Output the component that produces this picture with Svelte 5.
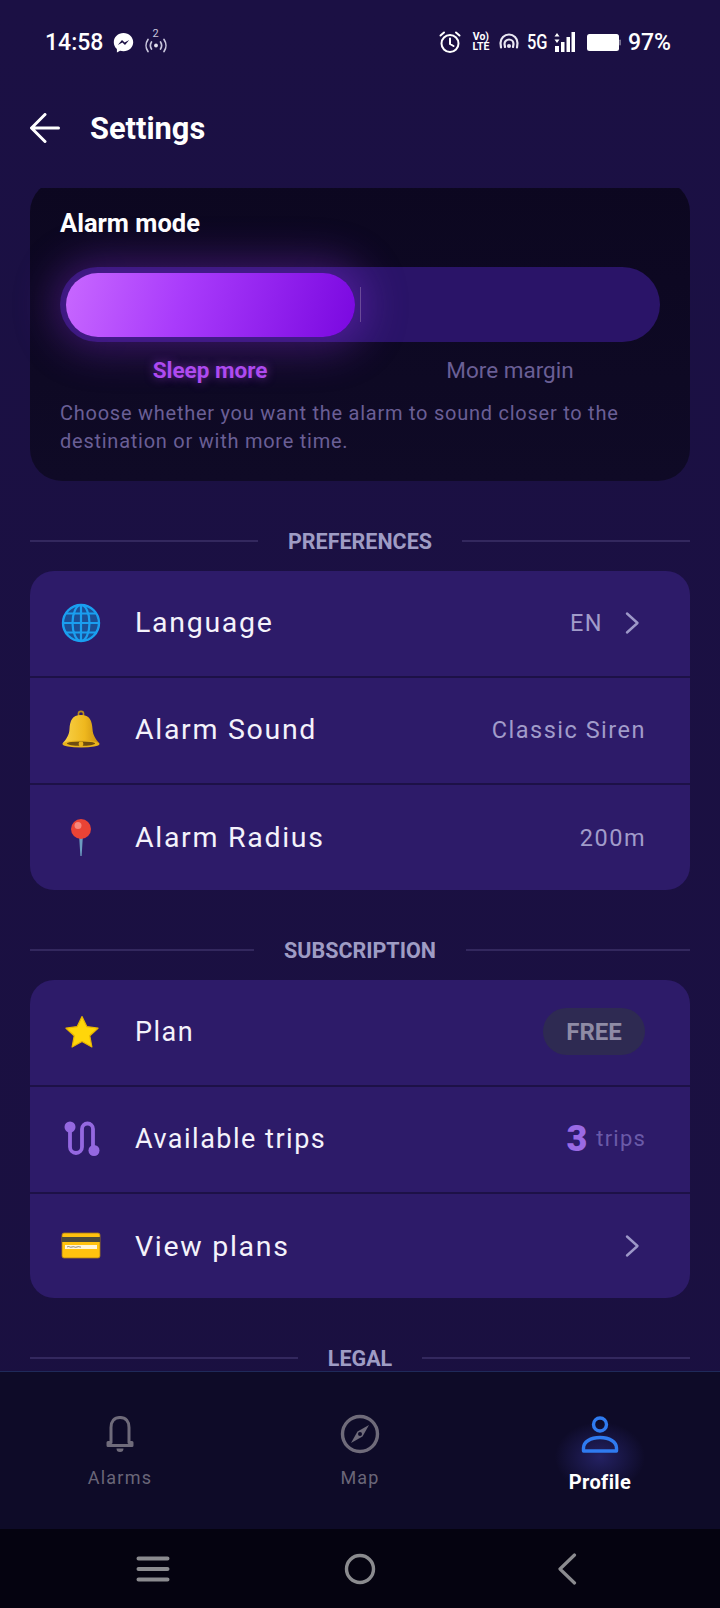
<script>
	const prefs = [
		{ icon: 'globe', label: 'Language', value: 'EN', chevron: true },
		{ icon: 'bell', label: 'Alarm Sound', value: 'Classic Siren' },
		{ icon: 'pin', label: 'Alarm Radius', value: '200m' }
	];
</script>

{#snippet chevron()}
	<svg class="chevron" width="16" height="24" viewBox="0 0 16 24">
		<path d="M2 2.500 12.500 12 2 21.500" fill="none" stroke="#9d98c8" stroke-width="2.400" stroke-linecap="round" stroke-linejoin="round" />
	</svg>
{/snippet}

{#snippet rowIcon(name)}
	{#if name === 'globe'}
		<svg width="40" height="40" viewBox="0 0 40 40">
			<circle cx="20" cy="20" r="18" fill="#1b4f96" stroke="#1a9ff0" stroke-width="2.400" />
			<g fill="none" stroke="#1a9ff0" stroke-width="2.200">
				<ellipse cx="20" cy="20" rx="8.500" ry="18" />
				<path d="M20 2v36M2 20h36M5 10.500h30M5 29.500h30" />
			</g>
		</svg>
	{:else if name === 'bell'}
		<svg width="40" height="40" viewBox="0 0 40 40">
			<defs>
				<linearGradient id="bellfill" x1="0" x2="1" y1="0" y2="0">
					<stop offset="0" stop-color="#f8d24a" />
					<stop offset="0.6" stop-color="#efb81e" />
					<stop offset="1" stop-color="#c98f10" />
				</linearGradient>
			</defs>
			<circle cx="20" cy="4" r="2.600" fill="none" stroke="#b98a1c" stroke-width="1.600" />
			<path d="M20 5C11 5 9 11 8.500 19 8.200 25 5.500 29 1.500 33.500h37C34.500 29 31.800 25 31.500 19 31 11 29 5 20 5Z" fill="url(#bellfill)" />
			<ellipse cx="20" cy="34" rx="18.500" ry="3.600" fill="#e9b41c" />
			<ellipse cx="20" cy="33.600" rx="14" ry="2.200" fill="#6e4d10" />
			<circle cx="20" cy="34" r="2.400" fill="#e9b41c" />
		</svg>
	{:else if name === 'pin'}
		<svg width="40" height="40" viewBox="0 0 40 40">
			<path d="M18 16h4L20.600 38h-1.200Z" fill="#6c9cc0" />
			<circle cx="20" cy="11" r="10" fill="#ea4335" />
			<circle cx="17" cy="7.500" r="3.500" fill="#f6877c" />
		</svg>
	{:else if name === 'star'}
		<svg width="40" height="40" viewBox="0 0 40 40">
			<path d="M21 4.500 25.800 14.600 37 16.200 28.800 23.800 30.900 35 21 29.500 11.100 35 13.200 23.800 5 16.200 16.200 14.600Z" fill="#ffd60a" stroke="#e8b400" stroke-width="1.200" stroke-linejoin="round" />
		</svg>
	{:else if name === 'route'}
		<svg width="40" height="40" viewBox="0 0 40 40">
			<path d="M9 9V28a6 6 0 0 0 12 0V10a5.500 5.500 0 0 1 11 0V31" fill="none" stroke="#9468e0" stroke-width="3.800" />
			<circle cx="9" cy="8" r="5.500" fill="#9468e0" />
			<circle cx="33" cy="31.500" r="5.500" fill="#9468e0" />
		</svg>
	{:else}
		<svg width="40" height="40" viewBox="0 0 40 40">
			<rect x="1" y="7" width="38" height="25" rx="2" fill="#ffc20e" stroke="#a87b16" stroke-width="0.800" />
			<rect x="1" y="11" width="38" height="5" fill="#4a4a3c" />
			<rect x="4" y="19" width="32" height="4" fill="#fff6d8" />
			<path d="M6 21c2-1.500 3 1 5 0s3 1 5 0 3 .5 4 0" fill="none" stroke="#555" stroke-width="0.700" />
		</svg>
	{/if}
{/snippet}

<div class="screen">
	<div class="status">
		<div class="status-left">
			<span class="clock">14:58</span>
			<svg class="messenger" width="21" height="21" viewBox="0 0 21 21">
				<path d="M10.500 1C5 1 .8 5 .8 10.200c0 2.800 1.200 5.200 3.100 6.900v3.400l3.200-1.700c1 .3 2.200.4 3.400.4 5.500 0 9.700-4 9.700-9S16 1 10.500 1Z" fill="#fff" />
				<path d="M4.800 13 9 8l2.600 2.500L16.200 8 12 13l-2.600-2.500Z" fill="#1b1044" />
			</svg>
			<span class="hotspot">
				<span class="hotspot-num">2</span>
				<svg width="24" height="20" viewBox="0 0 24 20">
					<g fill="none" stroke="#c9c6dc" stroke-width="1.700" stroke-linecap="round">
						<path d="M4 4.500C1.500 8 1.500 13 4 16.500M20 4.500c2.500 3.500 2.500 8.500 0 12" />
						<path d="M7.500 7c-1.300 2-1.300 5 0 7M16.500 7c1.300 2 1.300 5 0 7" />
					</g>
					<circle cx="12" cy="10.500" r="1.900" fill="#e4e2ee" />
				</svg>
			</span>
		</div>
		<div class="status-right">
			<svg width="24" height="24" viewBox="0 0 24 24">
				<g fill="none" stroke="#fff" stroke-width="2" stroke-linecap="round">
					<circle cx="12" cy="13.500" r="8.500" />
					<path d="M12 8.500v5.500l3.500 2M2.500 5.500 6 2.500M21.500 5.500 18 2.500" />
				</g>
			</svg>
			<span class="volte"><span>Vo)</span><span>LTE</span></span>
			<svg class="tower" width="20" height="18" viewBox="0 0 20 18">
				<g fill="none" stroke="#e9e7f2" stroke-width="2.200" stroke-linecap="round">
					<path d="M2 14.500 1.500 10a8.500 8.500 0 0 1 17 0L18 14.500" />
					<path d="M6 14 5.500 11a4.500 4.500 0 0 1 9 0L14 14" />
				</g>
				<circle cx="10" cy="13" r="2" fill="#e9e7f2" />
			</svg>
			<span class="net">5G</span>
			<svg class="signal" width="21" height="20" viewBox="0 0 21 20">
				<path d="M3 1 5.500 4.500h-5ZM3 11 .5 7.500h5Z" fill="#fff" />
				<rect x="1" y="14" width="4" height="6" fill="#fff" />
				<rect x="7" y="10" width="3.500" height="10" fill="#fff" />
				<rect x="12.500" y="5" width="3.500" height="15" fill="#fff" />
				<rect x="17.500" y="0" width="3.500" height="20" fill="#fff" />
			</svg>
			<svg class="battery" width="34" height="17" viewBox="0 0 34 17">
				<rect x="0" y="0" width="32" height="17" rx="2.500" fill="#fff" />
				<rect x="32.300" y="5.500" width="1.500" height="6" rx="0.700" fill="#8b88a0" />
			</svg>
			<span class="battery-text">97%</span>
		</div>
	</div>

	<header class="topbar">
		<svg width="30" height="30" viewBox="0 0 30 30">
			<path d="M28.500 15H2M15 1.500 1.500 15 15 28.500" fill="none" stroke="#fff" stroke-width="3" stroke-linecap="round" stroke-linejoin="round" />
		</svg>
		<h1>Settings</h1>
	</header>

	<main class="scroller">
		<section class="mode-card">
			<h2>Alarm mode</h2>
			<div class="track">
				<div class="thumb"></div>
				<div class="track-divider"></div>
			</div>
			<div class="mode-labels">
				<span class="on">Sleep more</span>
				<span>More margin</span>
			</div>
			<p>Choose whether you want the alarm to sound closer to the destination or with more time.</p>
		</section>

		<div class="section-title"><span>PREFERENCES</span></div>
		<section class="group">
			{#each prefs as row}
				<div class="row">
					<span class="row-icon">{@render rowIcon(row.icon)}</span>
					<span class="row-label">{row.label}</span>
					<span class="row-value">{row.value}</span>
					{#if row.chevron}{@render chevron()}{/if}
				</div>
			{/each}
		</section>

		<div class="section-title"><span>SUBSCRIPTION</span></div>
		<section class="group">
			<div class="row">
				<span class="row-icon">{@render rowIcon('star')}</span>
				<span class="row-label compact">Plan</span>
				<span class="badge">FREE</span>
			</div>
			<div class="row">
				<span class="row-icon">{@render rowIcon('route')}</span>
				<span class="row-label compact">Available trips</span>
				<span class="trips"><b>3</b> trips</span>
			</div>
			<div class="row short">
				<span class="row-icon">{@render rowIcon('card')}</span>
				<span class="row-label">View plans</span>
				{@render chevron()}
			</div>
		</section>

		<div class="section-title"><span>LEGAL</span></div>
	</main>

	<nav class="tabs">
		<div class="tab">
			<svg width="40" height="40" viewBox="0 0 40 40">
				<path d="M20 3.500c-6 0-9 4-9 10v15H8v3h24v-3h-3v-15c0-6-3-10-9-10Z" fill="none" stroke="#6f6b7a" stroke-width="3" stroke-linejoin="round" />
				<path d="M16.500 34.500h7a3.500 3.500 0 0 1-7 0ZM18 4a2 2 0 0 1 4 0Z" fill="#6f6b7a" />
			</svg>
			<span>Alarms</span>
		</div>
		<div class="tab">
			<svg width="40" height="40" viewBox="0 0 40 40">
				<circle cx="20" cy="20" r="17.500" fill="none" stroke="#6f6b7a" stroke-width="3.400" />
				<path d="M29 11 17.500 17.500 11 29 22.500 22.500Z" fill="#6f6b7a" />
				<circle cx="20" cy="20" r="2" fill="#0e0b28" />
			</svg>
			<span>Map</span>
		</div>
		<div class="tab active">
			<div class="glow"></div>
			<svg width="40" height="40" viewBox="0 0 40 40">
				<circle cx="20" cy="10.500" r="6.500" fill="none" stroke="#2f7bf0" stroke-width="3.400" />
				<path d="M3.500 37v-3c0-6 7-10.500 16.500-10.500S36.500 28 36.500 34v3Z" fill="none" stroke="#2f7bf0" stroke-width="3.400" stroke-linejoin="round" />
			</svg>
			<span>Profile</span>
		</div>
	</nav>

	<div class="android-bar">
		<svg width="34" height="28" viewBox="0 0 34 28">
			<path d="M2.500 3.500h29M2.500 14h29M2.500 24.500h29" fill="none" stroke="#8b8b8f" stroke-width="4" stroke-linecap="round" />
		</svg>
		<svg width="32" height="32" viewBox="0 0 32 32">
			<circle cx="16" cy="16" r="13.500" fill="none" stroke="#8b8b8f" stroke-width="3.400" />
		</svg>
		<svg width="20" height="32" viewBox="0 0 20 32">
			<path d="M17.500 2 3 16l14.500 14" fill="none" stroke="#8b8b8f" stroke-width="3.200" stroke-linecap="round" stroke-linejoin="round" />
		</svg>
	</div>
</div>

<style>
	:global(body) {
		margin: 0;
		background: #1a1040;
	}

	* {
		box-sizing: border-box;
	}

	.screen {
		width: 720px;
		height: 1608px;
		display: flex;
		flex-direction: column;
		overflow: hidden;
		font-family: Roboto, sans-serif;
		color: #fff;
		background: linear-gradient(180deg, #1b1044 0%, #1a1040 100%);
	}

	.status {
		height: 84px;
		flex: none;
		display: flex;
		align-items: center;
		justify-content: space-between;
		padding: 0 49px 0 45px;
	}

	.status-left,
	.status-right {
		display: flex;
		align-items: center;
	}

	.clock {
		font-size: 23px;
		font-weight: 500;
		width: 68px;
	}

	.messenger {
		margin-top: 1px;
	}

	.hotspot {
		position: relative;
		margin-left: 10px;
		margin-top: 6px;
		width: 24px;
		height: 20px;
		display: block;
	}

	.hotspot-num {
		position: absolute;
		top: -8px;
		left: 8.500px;
		font-size: 11px;
		color: #c9c6dc;
	}

	.volte {
		display: flex;
		flex-direction: column;
		align-items: center;
		font-size: 10.500px;
		font-weight: 700;
		line-height: 10px;
		margin-left: 9px;
		width: 20px;
	}

	.tower {
		margin-left: 8px;
	}

	.net {
		font-size: 20px;
		font-weight: 500;
		margin-left: 8px;
		transform: scaleX(0.82);
		transform-origin: left;
		width: 22px;
	}

	.signal {
		margin-left: 5px;
	}

	.battery {
		margin-left: 12px;
	}

	.battery-text {
		font-size: 23px;
		font-weight: 500;
		margin-left: 7px;
	}

	.topbar {
		height: 104px;
		flex: none;
		display: flex;
		align-items: center;
		gap: 30px;
		padding: 0 0 16px 30px;
	}

	h1 {
		margin: 0;
		font-size: 30.800px;
		font-weight: 700;
	}

	.scroller {
		flex: 1;
		min-height: 0;
		overflow: hidden;
		padding: 0 30px;
	}

	.mode-card {
		margin-top: -8px;
		height: 301px;
		padding: 28px 30px 0;
		border-radius: 32px;
		background: linear-gradient(180deg, #0c0720, #0f0a26);
	}

	h2 {
		margin: 0;
		font-size: 25.500px;
		font-weight: 700;
		line-height: 30px;
	}

	.track {
		position: relative;
		margin-top: 29px;
		height: 75px;
		padding: 5.500px;
		border-radius: 38px;
		background: #2a1468;
	}

	.thumb {
		width: 289px;
		height: 64px;
		border-radius: 32px;
		background: linear-gradient(105deg, #c868ff 0%, #a93bfb 40%, #7a08e0 100%);
		box-shadow: 0 0 40px 12px rgba(150, 50, 240, 0.34);
	}

	.track-divider {
		position: absolute;
		left: 300px;
		top: 20px;
		width: 1px;
		height: 35px;
		background: #6a4a98;
	}

	.mode-labels {
		display: grid;
		grid-template-columns: 1fr 1fr;
		margin-top: 14px;
		text-align: center;
		font-size: 22.500px;
		line-height: 28px;
		color: #6a5f96;
	}

	.mode-labels .on {
		font-weight: 700;
		color: #b04cf0;
		text-shadow: 0 0 10px rgba(176, 76, 240, 0.55);
	}

	.mode-card p {
		margin: 15px 0 0;
		font-size: 20px;
		line-height: 28px;
		letter-spacing: 0.750px;
		color: #6a5f96;
	}

	.section-title {
		display: flex;
		align-items: center;
		gap: 30px;
		height: 26px;
		margin: 47px 0 17px;
		font-size: 21.500px;
		font-weight: 700;
		color: #9f9cc4;
	}

	.section-title::before,
	.section-title::after {
		content: '';
		flex: 1;
		height: 2px;
		background: #33285e;
	}

	.group {
		border-radius: 24px;
		background: #2d1b69;
		overflow: hidden;
	}

	.row {
		height: 107px;
		display: flex;
		align-items: center;
		padding: 0 44px 2px 31px;
		border-bottom: 2px solid #1d1147;
	}

	.row:last-child {
		height: 105px;
		border-bottom: none;
		padding-bottom: 0;
	}

	.row.short:last-child {
		height: 104px;
	}

	.row-icon {
		width: 40px;
		height: 40px;
		display: block;
		margin-right: 34px;
	}

	.row-label {
		flex: 1;
		font-size: 28.500px;
		letter-spacing: 1.700px;
		color: #f4f2fb;
	}

	.row-label.compact {
		font-size: 27px;
		letter-spacing: 1.500px;
	}

	.row-value {
		font-size: 23.500px;
		letter-spacing: 1.500px;
		color: #a19cca;
	}

	.chevron {
		margin: 0 5px 0 22px;
	}

	.row:last-child .chevron {
		margin-left: 0;
	}

	.badge {
		width: 102px;
		height: 47px;
		margin-right: 1px;
		border-radius: 24px;
		display: flex;
		align-items: center;
		justify-content: center;
		background: #2e2a52;
		color: #8f8ba5;
		font-size: 24px;
		font-weight: 700;
	}

	.trips {
		display: flex;
		align-items: center;
		gap: 9px;
		font-size: 22px;
		letter-spacing: 1.200px;
		color: #6a5aa8;
	}

	.trips b {
		font-size: 36px;
		font-weight: 900;
		color: #9a6ae4;
		letter-spacing: 0;
	}

	.tabs {
		height: 158px;
		flex: none;
		display: grid;
		grid-template-columns: repeat(3, 240px);
		border-top: 1px solid #1f2a5a;
		background: #0e0b28;
	}

	.tab {
		position: relative;
		display: flex;
		flex-direction: column;
		align-items: center;
		padding-top: 42px;
		font-size: 18px;
		letter-spacing: 1.200px;
		color: #6a6678;
	}

	.tab svg {
		position: relative;
	}

	.tab span {
		margin-top: 13px;
		position: relative;
	}

	.tab.active span {
		margin-top: 16px;
		font-size: 20px;
		font-weight: 700;
		letter-spacing: 0.400px;
		color: #fff;
	}

	.glow {
		position: absolute;
		left: 50%;
		top: 50px;
		width: 90px;
		height: 70px;
		transform: translateX(-50%);
		background: radial-gradient(closest-side, rgba(62, 60, 170, 0.45), rgba(62, 60, 170, 0));
	}

	.android-bar {
		height: 79px;
		flex: none;
		display: grid;
		grid-template-columns: repeat(3, 1fr);
		justify-items: center;
		align-items: center;
		padding: 0 50px;
		background: #050310;
	}
</style>
